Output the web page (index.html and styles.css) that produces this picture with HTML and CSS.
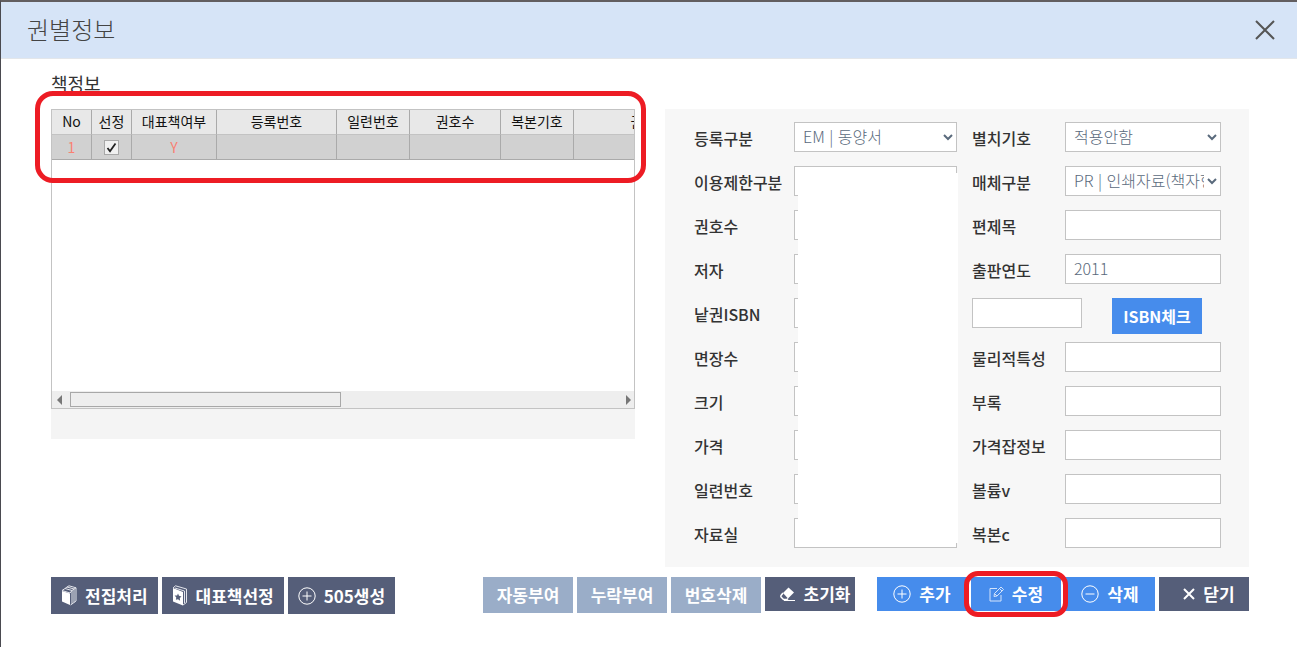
FILE: index.html
```html
<!DOCTYPE html>
<html lang="ko">
<head>
<meta charset="utf-8">
<title>권별정보</title>
<link rel="stylesheet" href="styles.css">
</head>
<body>
<div class="dialog" role="dialog" aria-labelledby="dialog-title">
  <header class="dialog-header">
    <h1 class="dialog-title" id="dialog-title">권별정보</h1>
    <button class="close" type="button" aria-label="닫기">
      <svg width="20" height="20" viewBox="0 0 20 20"><path d="M1 1 19 19M19 1 1 19" fill="none" stroke="#555" stroke-width="2"/></svg>
    </button>
  </header>

  <main class="content">
    <h2 class="section-title">책정보</h2>
    <div class="panels">
      <section class="books">
        <div class="grid-box">
          <table class="book-table">
            <colgroup>
              <col class="w-no"><col class="w-pick"><col class="w-main"><col class="w-reg"><col class="w-serial"><col class="w-vol"><col class="w-copy"><col class="w-title">
            </colgroup>
            <thead>
              <tr><th>No</th><th>선정</th><th>대표책여부</th><th>등록번호</th><th>일련번호</th><th>권호수</th><th>복본기호</th><th>권차</th></tr>
            </thead>
            <tbody>
              <tr><td>1</td><td><input class="check" type="checkbox" checked aria-label="선정"></td><td>Y</td><td></td><td></td><td></td><td></td><td></td></tr>
            </tbody>
          </table>
          <div class="scrollbar">
            <svg width="5" height="10" viewBox="0 0 5 10"><path d="M5 0V10L0 5Z" fill="#777"/></svg>
            <div class="track"><div class="thumb"></div></div>
            <svg width="5" height="10" viewBox="0 0 5 10"><path d="M0 0V10L5 5Z" fill="#777"/></svg>
          </div>
        </div>
        <div class="grid-footer"></div>
        <div class="mark mark-table"></div>
      </section>

      <form class="form">
        <label for="f1">등록구분</label>
        <select id="f1"><option>EM | 동양서</option></select>
        <label class="second" for="g1">별치기호</label>
        <select id="g1"><option>적용안함</option></select>

        <label for="f2">이용제한구분</label>
        <input id="f2" type="text">
        <label class="second" for="g2">매체구분</label>
        <select id="g2"><option>PR | 인쇄자료(책자형)</option></select>

        <label for="f3">권호수</label>
        <input id="f3" type="text">
        <label class="second" for="g3">편제목</label>
        <input id="g3" type="text">

        <label for="f4">저자</label>
        <input id="f4" type="text">
        <label class="second" for="g4">출판연도</label>
        <input id="g4" type="text" value="2011">

        <label for="f5">낱권ISBN</label>
        <input id="f5" type="text">
        <div class="isbn">
          <input class="isbn-input" type="text" aria-label="ISBN">
          <button class="btn blue isbn-btn" type="button">ISBN체크</button>
        </div>

        <label for="f6">면장수</label>
        <input id="f6" type="text">
        <label class="second" for="g6">물리적특성</label>
        <input id="g6" type="text">

        <label for="f7">크기</label>
        <input id="f7" type="text">
        <label class="second" for="g7">부록</label>
        <input id="g7" type="text">

        <label for="f8">가격</label>
        <input id="f8" type="text">
        <label class="second" for="g8">가격잡정보</label>
        <input id="g8" type="text">

        <label for="f9">일련번호</label>
        <input id="f9" type="text">
        <label class="second" for="g9">볼륨v</label>
        <input id="g9" type="text">

        <label for="f10">자료실</label>
        <input id="f10" type="text">
        <label class="second" for="g10">복본c</label>
        <input id="g10" type="text">

        <div class="cover"></div>
      </form>
    </div>

    <footer class="actions">
      <div class="group">
        <button class="btn dark tall" type="button">
          <svg width="16" height="21" viewBox="0 0 16 21"><path d="M1 6 9 8.500V20L1 16.500Z" fill="#fff"/><path d="M1 5.500 4 3.500 11 5.500V19L9.500 20M4 3.500 6 2 13 4V17.500L11 19M6 2 8 .800 15 2.800V16L13 17.500M1 5.500 9 8 11 5.500M11 5.500 13 4 15 2.800" fill="none" stroke="#e3e5ec"/></svg>
          전집처리
        </button>
        <button class="btn dark tall" type="button">
          <svg width="16" height="21" viewBox="0 0 16 21"><path d="M1 3 11 7V20.500L1 16.500Z" fill="#fff"/><path d="M1 3 3.500 .800 14.500 4V17.500L11 20M3 3 12.500 6V18" fill="none" stroke="#e3e5ec"/><path d="m6 8.500 1 2.200 2.500.8-1.700 1.600.3 2.600L6 14.300l-2.100.4.4-2.300-1.700-2 2.500.2Z" fill="#555e79"/></svg>
          대표책선정
        </button>
        <button class="btn dark tall" type="button">
          <svg width="18" height="18" viewBox="0 0 18 18"><path d="M9 4.500V13.500M4.500 9H13.500" stroke="#fff"/><circle cx="9" cy="9" r="8.200" fill="none" stroke="#fff"/></svg>
          505생성
        </button>
      </div>
      <div class="group middle">
        <button class="btn light" type="button">자동부여</button>
        <button class="btn light" type="button">누락부여</button>
        <button class="btn light" type="button">번호삭제</button>
        <button class="btn dark shift" type="button">
          <svg width="16" height="15" viewBox="0 0 16 15"><path d="M8.500.500 14 5.500 8 11.500 3 6Z" fill="#fff"/><path d="M3 6 1 8.500Q.500 9.500 1.500 10.500L3.500 12.500H7L8 11.500" fill="none" stroke="#fff" stroke-width="1.500"/><path d="M4 13.500H15" stroke="#fff"/></svg>
          초기화
        </button>
      </div>
      <div class="group">
        <button class="btn blue" type="button">
          <svg width="18" height="18" viewBox="0 0 18 18"><path d="M9 4.500V13.500M4.500 9H13.500" stroke="#fff"/><circle cx="9" cy="9" r="8.200" fill="none" stroke="#fff"/></svg>
          추가
        </button>
        <div class="marked">
          <button class="btn blue" type="button">
            <svg width="15" height="16" viewBox="0 0 15 16"><path d="M8 2.500H1V15H12V9M5.500 7.500 12 1 14.500 3.500 8 10 5 10.500ZM5.500 7.500 8 10M10.500 2.500 13 5" fill="none" stroke="#d3e3fb"/></svg>
            수정
          </button>
          <div class="mark mark-button"></div>
        </div>
        <button class="btn blue" type="button">
          <svg width="18" height="18" viewBox="0 0 18 18"><path d="M4.500 9H13.500" stroke="#fff"/><circle cx="9" cy="9" r="8.200" fill="none" stroke="#fff"/></svg>
          삭제
        </button>
        <button class="btn dark shift" type="button">
          <svg width="12" height="12" viewBox="0 0 12 12"><path d="M1 1 11 11M11 1 1 11" stroke="#fff" stroke-width="2"/></svg>
          닫기
        </button>
      </div>
    </footer>
  </main>
</div>
</body>
</html>
```
FILE: styles.css
```css
* {
  box-sizing: border-box;
}

body {
  margin: 0;
  font-family: "Noto Sans CJK KR", sans-serif;
  background: #fff;
  color: #333;
}

.dialog {
  min-height: 100vh;
  border-top: 2px solid #625e60;
  border-left: 1px solid #4a4a50;
}

.dialog-header {
  display: flex;
  align-items: center;
  justify-content: space-between;
  height: 57px;
  padding: 0 22px 0 26px;
  background: #d6e4f7;
  border-bottom: 1px solid #e3e6ea;
}

.dialog-title {
  margin: 0;
  padding-bottom: 2px;
  font-size: 24px;
  font-weight: 300;
  line-height: 32px;
  color: #444;
}

.close {
  display: flex;
  padding: 0;
  border: 0;
  background: none;
}

.content {
  padding: 9px 48px 32px 50px;
}

.section-title {
  margin: 0 0 11px;
  font-size: 18px;
  font-weight: 400;
  line-height: 30px;
}

.panels {
  display: grid;
  grid-template-columns: 1fr 1fr;
  gap: 30px;
  align-items: start;
}

.books {
  position: relative;
  min-width: 0;
}

.grid-box {
  display: flex;
  flex-direction: column;
  justify-content: space-between;
  height: 300px;
  overflow: hidden;
  border: 1px solid #c3c3c3;
}

.book-table {
  width: 662px;
  table-layout: fixed;
  border-collapse: separate;
  border-spacing: 0;
  font-size: 14px;
  line-height: 20px;
  color: #111;
}

.w-no, .w-pick { width: 40px; }
.w-main { width: 85px; }
.w-reg { width: 120px; }
.w-serial, .w-copy { width: 73px; }
.w-vol { width: 91px; }
.w-title { width: 140px; }

.book-table th,
.book-table td {
  height: 25px;
  padding: 0 0 2px;
  border-right: 1px solid #aaa;
  border-bottom: 1px solid #c3c3c3;
  font-weight: 400;
  text-align: center;
  vertical-align: middle;
}

.book-table th {
  background: #e8e8e8;
}

.book-table td {
  padding: 0;
  background: #d1d1d1;
  border-bottom-color: #aaa;
  color: #fa8072;
}

.check {
  appearance: none;
  display: block;
  width: 15px;
  height: 15px;
  margin: 0 auto;
  border: 1px solid #a8a8a8;
  background: #f0f0f0 url("data:image/svg+xml,%3Csvg xmlns='http://www.w3.org/2000/svg' viewBox='0 0 13 13'%3E%3Cpath d='M2.500 7 5 10.200 10.500 2.500' fill='none' stroke='%23222' stroke-width='1.800'/%3E%3C/svg%3E");
}

.scrollbar {
  display: flex;
  align-items: center;
  gap: 8px;
  height: 17px;
  padding: 0 3px 0 5px;
  background: #eee;
}

.track {
  flex: 1;
}

.thumb {
  width: 49.5%;
  height: 15px;
  border: 1px solid #a8a8a8;
}

.grid-footer {
  height: 30px;
  background: #f4f4f4;
}

.mark {
  position: absolute;
  border: 5px solid #ed1c24;
  border-radius: 18px;
  pointer-events: none;
}

.mark-table {
  top: -18px;
  left: -16px;
  right: -11px;
  height: 92px;
}

.mark-button {
  inset: -6px -7px;
  border-radius: 14px;
}

.form {
  position: relative;
  display: grid;
  grid-template-columns: 100px minmax(0, 163fr) 108px minmax(0, 156fr);
  grid-auto-rows: 30px;
  row-gap: 14px;
  padding: 13px 28px 19px 29px;
  background: #f7f7f7;
  font-size: 16px;
}

.form label {
  font-weight: 500;
  line-height: 32px;
  white-space: nowrap;
}

.form .second {
  padding-left: 15px;
}

.form input,
.form select {
  width: 100%;
  min-width: 0;
  height: 30px;
  margin: 0;
  padding: 0 8px 3px;
  border: 1px solid #c3c3c3;
  border-radius: 0;
  background: #fff;
  color: #5a6a7c;
  font-family: inherit;
  font-size: 16px;
  font-weight: 300;
}

.form select {
  padding: 0 0 2px 4px;
}

.isbn {
  grid-column: 3 / 5;
  display: flex;
  align-items: flex-start;
  gap: 30px;
  padding-left: 15px;
}

.form .isbn-input {
  width: 110px;
}

.cover {
  position: absolute;
  grid-column: 2 / 3;
  grid-row: 2 / 11;
  inset: 7px -1px 5px 4px;
  background: #fff;
}

.actions {
  display: flex;
  align-items: flex-start;
  gap: 22px;
  margin-top: 10px;
}

.group {
  display: flex;
  align-items: flex-start;
  gap: 4px;
}

.middle {
  margin-left: auto;
}

.marked {
  position: relative;
}

.btn {
  display: flex;
  align-items: center;
  justify-content: center;
  gap: 8px;
  min-width: 90px;
  height: 34px;
  padding: 0;
  border: 0;
  color: #fff;
  font-family: inherit;
  font-size: 17px;
  font-weight: 700;
  line-height: 24px;
  white-space: nowrap;
}

.dark { background: #555e79; }
.light { height: 36px; background: #9aadc8; }
.blue { background: #468cec; }

.tall {
  height: 37px;
  padding: 0 10px;
}

.isbn-btn {
  height: 36px;
  font-size: 16px;
}

.shift { padding-left: 10px; }
```
